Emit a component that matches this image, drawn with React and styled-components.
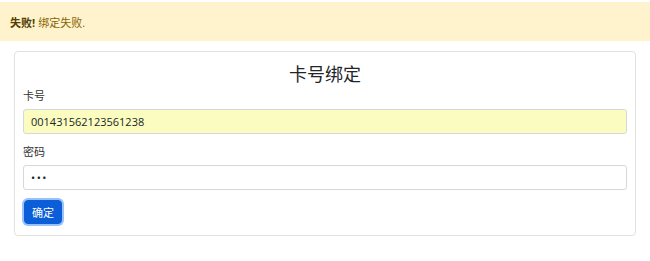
import React from "react";
import styled, { createGlobalStyle } from "styled-components";

const Global = createGlobalStyle`
  html, body { margin: 0; padding: 0; background: #fff; }
  body {
    padding-top: 2px;
    font-family: "Open Sans", "Noto Sans CJK SC", sans-serif;
    font-size: 11px;
    color: #212529;
  }
  * { box-sizing: border-box; }
`;

const Alert = styled.div`
  height: 39px;
  display: flex;
  align-items: center;
  padding: 0 10px;
  background: #fff3cd;
  color: #856404;
  font-size: 11px;
`;

const Strong = styled.strong`
  color: #533f03;
  font-weight: 700;
  margin-right: 3px;
`;

const Container = styled.div`
  padding: 10px 14px;
`;

const Card = styled.form`
  border: 1px solid #e1e1e1;
  border-radius: 4px;
  padding: 0 8px 11px;
  display: flex;
  flex-direction: column;
  align-items: stretch;
`;

const Title = styled.h3`
  margin: 10px 0 0;
  text-align: center;
  font-size: 18px;
  font-weight: 400;
  line-height: 24px;
  color: #212529;
`;

const Label = styled.label`
  display: block;
  margin: ${(p) => p.$top}px 0 5px;
  line-height: 16px;
  font-size: 11px;
  color: #333;
`;

const Input = styled.input`
  display: block;
  width: 100%;
  height: 25px;
  padding: 0 7px;
  border: 1px solid #d6d9dc;
  border-radius: 3px;
  font-family: "Open Sans", "Noto Sans CJK SC", sans-serif;
  font-size: 11px;
  color: #212529;
  letter-spacing: ${(p) => (p.type === "password" ? "1.5px" : "0")};
  background: ${(p) => (p.$autofill ? "#fafdbf" : "#fff")};
  outline: none;
`;

const Button = styled.button`
  align-self: flex-start;
  margin-top: 10px;
  height: 24px;
  padding: 0 7px;
  border: 1px solid #0b5ed7;
  border-radius: 4px;
  background: #0b5ed7;
  color: #fff;
  font-family: "Open Sans", "Noto Sans CJK SC", sans-serif;
  font-size: 11px;
  box-shadow: 0 0 0 2px rgba(49, 132, 253, 0.5);
  margin-left: 1px;
`;

export default function App() {
  return (
    <>
      <Global />
      <Alert>
        <Strong>失败!</Strong>绑定失败.
      </Alert>
      <Container>
        <Card onSubmit={(e) => e.preventDefault()}>
          <Title>卡号绑定</Title>
          <Label $top={2}>卡号</Label>
          <Input $autofill defaultValue="001431562123561238" />
          <Label $top={10}>密码</Label>
          <Input type="password" defaultValue="123" />
          <Button type="submit">确定</Button>
        </Card>
      </Container>
    </>
  );
}
